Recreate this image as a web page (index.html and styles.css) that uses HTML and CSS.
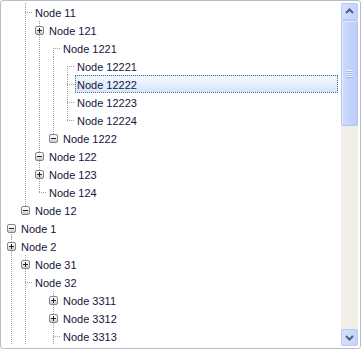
FILE: index.html
```html
<!DOCTYPE html>
<html>
<head>
<meta charset="utf-8">
<link rel="stylesheet" href="styles.css">
</head>
<body>
<div class="tree">
  <div class="content">
    <div class="row"><i class="c"></i><i class="c v h"></i><span class="lbl">Node 11</span></div>
    <div class="row"><i class="c"></i><i class="c v"></i><i class="c v"><b class="bx p"></b></i><span class="lbl">Node 121</span></div>
    <div class="row"><i class="c"></i><i class="c v"></i><i class="c v"></i><i class="c b h"></i><span class="lbl">Node 1221</span></div>
    <div class="row"><i class="c"></i><i class="c v"></i><i class="c v"></i><i class="c v"></i><i class="c b h"></i><span class="lbl">Node 12221</span></div>
    <div class="row"><i class="c"></i><i class="c v"></i><i class="c v"></i><i class="c v"></i><i class="c v h"></i><span class="lbl sel">Node 12222</span></div>
    <div class="row"><i class="c"></i><i class="c v"></i><i class="c v"></i><i class="c v"></i><i class="c v h"></i><span class="lbl">Node 12223</span></div>
    <div class="row"><i class="c"></i><i class="c v"></i><i class="c v"></i><i class="c v"></i><i class="c t h"></i><span class="lbl">Node 12224</span></div>
    <div class="row"><i class="c"></i><i class="c v"></i><i class="c v"></i><i class="c t"><b class="bx m"></b></i><span class="lbl">Node 1222</span></div>
    <div class="row"><i class="c"></i><i class="c v"></i><i class="c v"><b class="bx m"></b></i><span class="lbl">Node 122</span></div>
    <div class="row"><i class="c"></i><i class="c v"></i><i class="c v"><b class="bx p"></b></i><span class="lbl">Node 123</span></div>
    <div class="row"><i class="c"></i><i class="c v"></i><i class="c t h"></i><span class="lbl">Node 124</span></div>
    <div class="row"><i class="c"></i><i class="c t"><b class="bx m"></b></i><span class="lbl">Node 12</span></div>
    <div class="row"><i class="c b"><b class="bx m"></b></i><span class="lbl">Node 1</span></div>
    <div class="row"><i class="c v"><b class="bx p"></b></i><span class="lbl">Node 2</span></div>
    <div class="row"><i class="c v"></i><i class="c v"><b class="bx p"></b></i><span class="lbl">Node 31</span></div>
    <div class="row"><i class="c v"></i><i class="c v h"></i><span class="lbl">Node 32</span></div>
    <div class="row"><i class="c v"></i><i class="c v"></i><i class="c"></i><i class="c v"><b class="bx p"></b></i><span class="lbl">Node 3311</span></div>
    <div class="row"><i class="c v"></i><i class="c v"></i><i class="c"></i><i class="c v"><b class="bx p"></b></i><span class="lbl">Node 3312</span></div>
    <div class="row"><i class="c v"></i><i class="c v"></i><i class="c"></i><i class="c v h"></i><span class="lbl">Node 3313</span></div>
  </div>
  <div class="sb">
    <div class="btn">
      <svg width="15" height="15" viewBox="0 0 15 15"><polyline points="4,9 7.5,5.5 11,9" fill="none" stroke="#4d6185" stroke-width="2"/></svg>
    </div>
    <div class="track">
      <div class="thumb">
        <div class="grip"><span></span><span></span><span></span><span></span></div>
      </div>
    </div>
    <div class="btn">
      <svg width="15" height="15" viewBox="0 0 15 15"><polyline points="4,6 7.5,9.5 11,6" fill="none" stroke="#4d6185" stroke-width="2"/></svg>
    </div>
  </div>
</div>
</body>
</html>
```
FILE: styles.css
```css
html, body {
  margin: 0;
  padding: 0;
  background: #fff;
}

.tree {
  width: 361px;
  height: 349px;
  box-sizing: border-box;
  border: 1px solid #b9bec6;
  border-radius: 3px;
  display: flex;
  overflow: hidden;
  background: #fff;
}

.content {
  flex: 1;
  padding: 2px 3px 0 3px;
  overflow: hidden;
  font-family: "Liberation Sans", Arial, sans-serif;
  font-size: 11px;
  color: #15153a;
}

.row {
  display: flex;
  height: 18px;
}

.c {
  display: block;
  width: 14px;
  height: 18px;
  flex: none;
  position: relative;
}

.c.v::before,
.c.t::before,
.c.b::before {
  content: "";
  position: absolute;
  left: 7px;
  width: 1px;
  background: repeating-linear-gradient(to bottom, #a0a0a0 0 1px, transparent 1px 2px);
}
.c.v::before { top: 0; bottom: 0; }
.c.t::before { top: 0; height: 10px; }
.c.b::before { top: 9px; bottom: 0; }

.c.h::after {
  content: "";
  position: absolute;
  left: 7px;
  top: 9px;
  width: 7px;
  height: 1px;
  background: repeating-linear-gradient(to right, #a0a0a0 0 1px, transparent 1px 2px);
}

.bx {
  display: block;
  position: relative;
  z-index: 1;
  width: 9px;
  height: 9px;
  box-sizing: border-box;
  margin: 5px 0 0 3px;
  border: 1px solid #858686;
  border-radius: 2px;
  background: linear-gradient(to bottom, #ffffff 0%, #f0f0f0 45%, #c9c9c9 100%);
}
.bx::before {
  content: "";
  position: absolute;
  left: 1px;
  top: 3px;
  width: 5px;
  height: 1px;
  background: #222;
}
.bx.p::after {
  content: "";
  position: absolute;
  left: 3px;
  top: 1px;
  width: 1px;
  height: 5px;
  background: #222;
}

.lbl {
  display: block;
  height: 18px;
  box-sizing: border-box;
  margin-left: 1px;
  border: 1px solid transparent;
  padding: 1px 1px 0 1px;
  line-height: 16px;
  white-space: nowrap;
}

.lbl.sel {
  flex: 1;
  border: 1px dotted #4f6a90;
  background: linear-gradient(to bottom, #f3f8fe 0%, #e6f0fd 50%, #d4e5fb 100%);
}

.sb {
  width: 17px;
  flex: none;
  margin: 2px 2px 2px 0;
  display: flex;
  flex-direction: column;
  background: #f1efe7;
}

.btn {
  height: 17px;
  box-sizing: border-box;
  border: 1px solid #b7c9f4;
  border-radius: 2px;
  background: linear-gradient(to right, #d6e1fd 0%, #c3d3fb 100%);
  display: flex;
  align-items: center;
  justify-content: center;
}

.track {
  flex: 1;
  display: flex;
  flex-direction: column;
  background: #f1efe7;
}

.thumb {
  height: 106px;
  box-sizing: border-box;
  border: 1px solid #b3c5f2;
  border-radius: 2px;
  background: linear-gradient(to right, #cfdbfd 0%, #c2d2fc 60%, #bccdfa 100%);
  box-shadow: inset 1px 1px 0 #e6edff;
  display: flex;
  align-items: center;
  justify-content: center;
}

.grip {
  display: flex;
  flex-direction: column;
  gap: 1px;
}
.grip span {
  display: block;
  width: 7px;
  height: 1px;
  background: #eef3ff;
  box-shadow: 0 1px 0 #9fb6ee;
}
```
